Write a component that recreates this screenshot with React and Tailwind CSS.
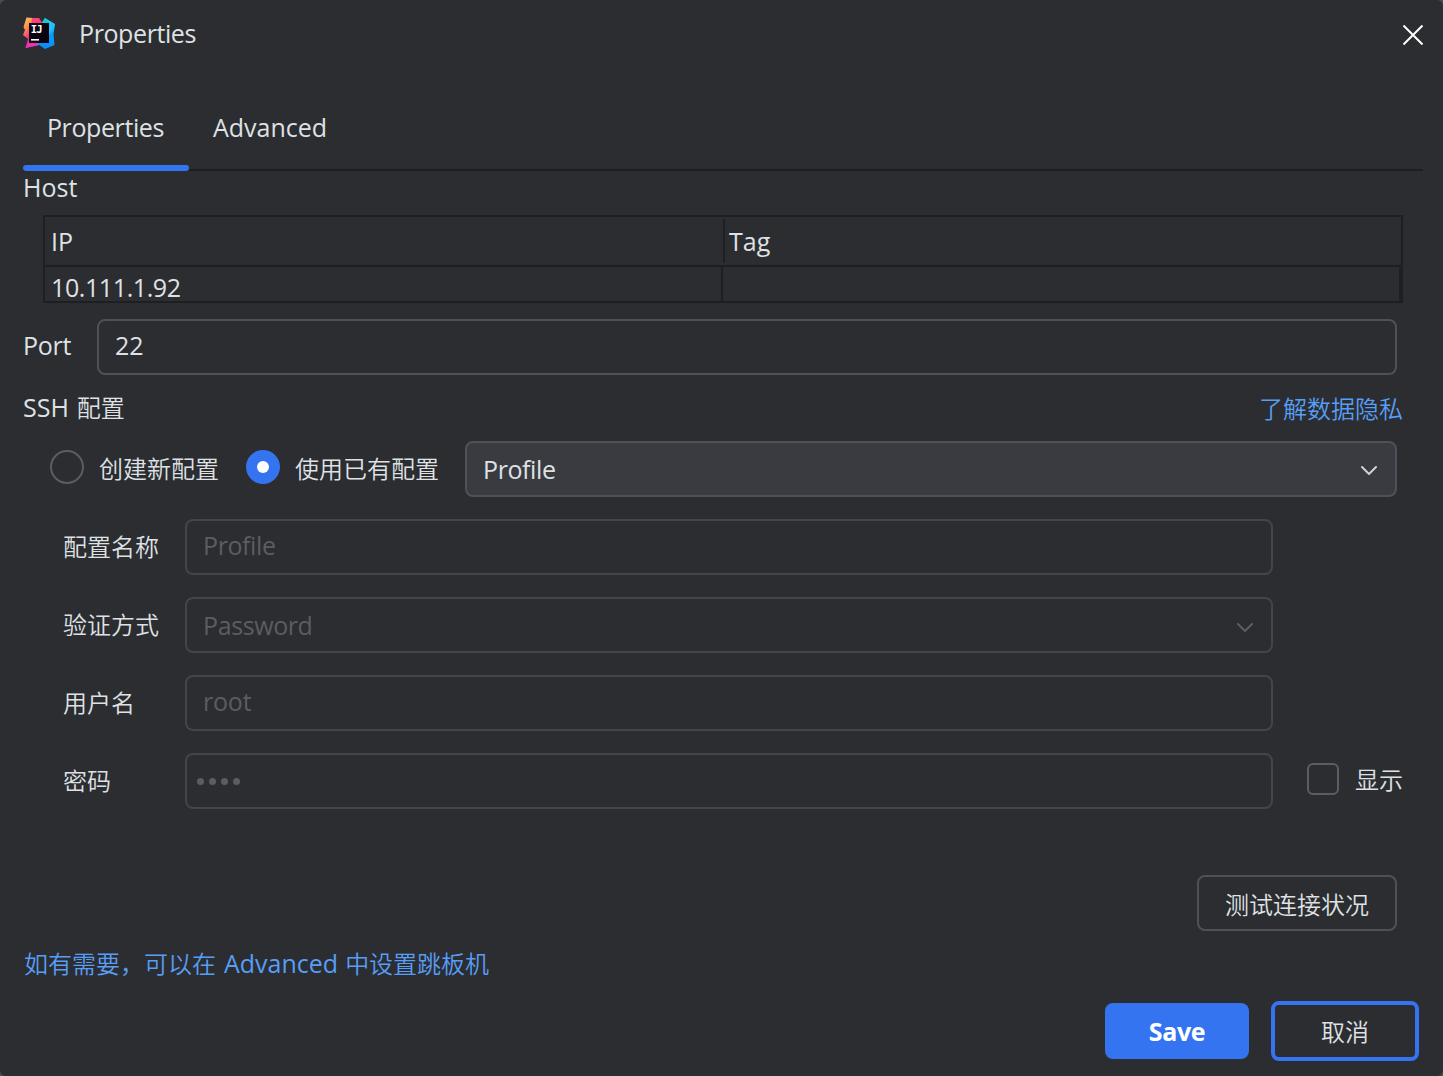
import { clsx } from "clsx";

const latin = "font-['Open_Sans','Noto_Sans_CJK_SC',sans-serif] text-[25px] leading-8";
const cjk = "font-['Noto_Sans_CJK_SC',sans-serif] text-2xl leading-8";
const light = "font-[350]";
const tight = "tracking-[-0.4px]";

const Logo = () => (
  <svg width="33" height="33" viewBox="0 0 33 33" className="-mt-0.5 shrink-0">
    <defs>
      <linearGradient id="warm" x1="0" y1="0" x2="0.4" y2="1">
        <stop offset="0" stopColor="#fcd06c" />
        <stop offset="0.4" stopColor="#fb8a4c" />
        <stop offset="0.75" stopColor="#f5268b" />
        <stop offset="1" stopColor="#e837b8" />
      </linearGradient>
      <linearGradient id="pink" x1="0" y1="0" x2="1" y2="1">
        <stop offset="0" stopColor="#ff4a7e" />
        <stop offset="1" stopColor="#fe2c70" />
      </linearGradient>
      <linearGradient id="cool" x1="0.6" y1="0" x2="0.4" y2="1">
        <stop offset="0" stopColor="#21d8f8" />
        <stop offset="0.5" stopColor="#0a9bf5" />
        <stop offset="1" stopColor="#0b8cf8" />
      </linearGradient>
    </defs>
    <path d="M3.5 0.5 L10 1 L12 8 L8 27 L2.5 31 L5 22 L0 18 L2 13 L0.5 10Z" fill="url(#warm)" />
    <path d="M9 1 L16 1 L20 7 L8 8Z" fill="url(#pink)" />
    <path d="M2.5 31 L6 24 L21 26 L17 28Z" fill="#a14df2" />
    <path d="M6 24 L2.5 31 L15 28 L13 25Z" fill="#f332a8" />
    <path d="M18 7 L22 1 L32 7 L30.5 17 L31.5 28 L22 32 L15 27 L25 20Z" fill="url(#cool)" />
    <path d="M22 1 L26 7 L18 7Z" fill="#19c5cf" />
    <path d="M26 7 L32 7 L26 18Z" fill="#2bb9ff" />
    <rect x="6" y="6" width="20" height="20" fill="#0c0510" />
    <text x="7.7 13.3" y="16" fontSize="10.5" fontWeight="700" fill="#fff" fontFamily="DejaVu Sans Mono, monospace">IJ</text>
    <rect x="8" y="22" width="8" height="1.6" fill="#fff" />
  </svg>
);

const Chevron = ({ className }) => (
  <svg width="16" height="10" viewBox="0 0 16 10" fill="none" className={className}>
    <path d="M1 1 L8 8 L15 1" stroke="currentColor" strokeWidth="2" strokeLinecap="round" strokeLinejoin="round" />
  </svg>
);

const Field = ({ label, children }) => (
  <div className="flex h-14 items-center">
    <span className={clsx(cjk, light, "w-[122px] shrink-0 pb-0.5")}>{label}</span>
    <div className={clsx(latin, tight, "flex h-14 w-[1088px] items-center justify-between rounded-lg border-2 border-[#43454a] px-4 text-[#5a5d63]")}>
      {children}
    </div>
  </div>
);

const App = () => {
  return (
    <div className="h-[1076px] w-[1443px] overflow-hidden bg-[#4a4c50]">
      <div className="flex h-full flex-col rounded-md bg-[#2b2d30] text-[#dfe1e5]">
        <header className="flex h-[69px] shrink-0 items-center pr-5 pl-[23px]">
          <Logo />
          <h1 className={clsx(latin, tight, "ml-[23px] flex-1 pb-[3px]")}>Properties</h1>
          <svg width="20" height="20" viewBox="0 0 20 20" className="text-white">
            <path d="M0.5 0.5 L19.5 19.5 M19.5 0.5 L0.5 19.5" stroke="currentColor" strokeWidth="2" />
          </svg>
        </header>

        <nav className={clsx(latin, "mr-5 ml-[23px] flex h-[102px] shrink-0 border-b-2 border-[#1e1f22] pt-[42px]")}>
          <div className="flex h-[60px] w-[166px] flex-col items-center justify-between">
            <span className={clsx(tight, "pr-px")}>Properties</span>
            <span className="h-1.5 w-full rounded-full bg-[#3574f0]" />
          </div>
          <span className="ml-6">Advanced</span>
        </nav>

        <main className="flex flex-1 flex-col pl-[23px]">
          <p className={latin}>Host</p>
          <div className={clsx(latin, "mt-3 ml-5 flex h-[88px] w-[1360px] flex-col overflow-hidden border-2 border-[#1e1f22]")}>
            <div className="flex h-[50px] shrink-0 items-center border-b-2 border-[#1e1f22]">
              <span className="w-[678px] pl-1.5">IP</span>
              <span className="flex h-11 items-center border-l-2 border-[#1e1f22] pl-1">Tag</span>
            </div>
            <div className="flex h-[34px] shrink-0">
              <span className={clsx(tight, "w-[678px] border-r-2 border-[#1e1f22] pt-1 pl-1.5")}>10.111.1.92</span>
              <span className="flex-1 border-r-2 border-[#1e1f22]" />
            </div>
          </div>

          <div className="mt-4 flex h-14 items-center">
            <span className={clsx(latin, "w-[74px] pb-1 tracking-[-0.25px]")}>Port</span>
            <div className={clsx(latin, "flex h-14 w-[1300px] items-center rounded-lg border-2 border-[#4e5157] px-4 pb-1")}>22</div>
          </div>

          <div className="mt-4 flex h-8 w-[1380px] items-center justify-between">
            <span className={clsx(cjk, light, "flex")}>
              <span className={clsx(latin, "mr-2 font-normal")}>SSH</span>配置
            </span>
            <span className={clsx(cjk, light, "pt-px text-[#589df6]")}>了解数据隐私</span>
          </div>

          <div className="mt-[18px] flex h-14 items-center pl-[27px]">
            <span className="-mt-1 size-[34px] rounded-full border-2 border-[#5a5d63]" />
            <span className={clsx(cjk, light, "ml-[15px] w-[147px] pb-0.5")}>创建新配置</span>
            <span className="-mt-1 flex size-[34px] items-center justify-center rounded-full bg-[#3574f0]">
              <span className="size-3 rounded-full bg-white" />
            </span>
            <span className={clsx(cjk, light, "ml-[15px] w-[170px] pb-0.5")}>使用已有配置</span>
            <div className={clsx(latin, tight, "flex h-14 w-[932px] items-center justify-between rounded-lg border-2 border-[#4e5157] bg-[#393b40] px-4")}>
              Profile
              <Chevron className="mt-1 mr-0.5 text-[#ced0d6]" />
            </div>
          </div>

          <div className="mt-[22px] flex flex-col gap-[22px] pl-10">
            <Field label="配置名称">
              <span className="pb-1">Profile</span>
            </Field>
            <Field label="验证方式">
              <span>Password</span>
              <Chevron className="mt-1.5 mr-0.5" />
            </Field>
            <Field label="用户名">
              <span className="pb-1 tracking-[-0.2px]">root</span>
            </Field>
            <div className="flex">
              <Field label="密码">
                <span className="-ml-1.5 flex gap-[5px]">
                  {[0, 1, 2, 3].map((dot) => (
                    <span key={dot} className="size-[7px] rounded-full bg-current" />
                  ))}
                </span>
              </Field>
              <span className="mt-2.5 ml-[34px] size-8 rounded-md border-2 border-[#5a5d63]" />
              <span className={clsx(cjk, light, "mt-2.5 ml-4")}>显示</span>
            </div>
          </div>

          <button className={clsx(cjk, light, "mt-[66px] ml-[1174px] h-14 w-[200px] rounded-lg border-2 border-[#4e5157] pt-0.5")}>测试连接状况</button>

          <p className={clsx(cjk, light, "mt-4 ml-px flex text-[#589df6]")}>
            如有需要，可以在
            <span className={clsx(latin, "mr-[7px] ml-2 font-normal")}>Advanced</span>
            中设置跳板机
          </p>
        </main>

        <footer className="flex h-[75px] shrink-0 items-start justify-end gap-[22px] pr-6">
          <button className={clsx(latin, tight, "mt-0.5 h-14 w-36 rounded-lg bg-[#3574f0] font-bold text-white")}>Save</button>
          <button className={clsx(cjk, light, "h-[60px] w-[148px] rounded-lg border-4 border-[#3574f0]")}>取消</button>
        </footer>
      </div>
    </div>
  );
};

export default App;
